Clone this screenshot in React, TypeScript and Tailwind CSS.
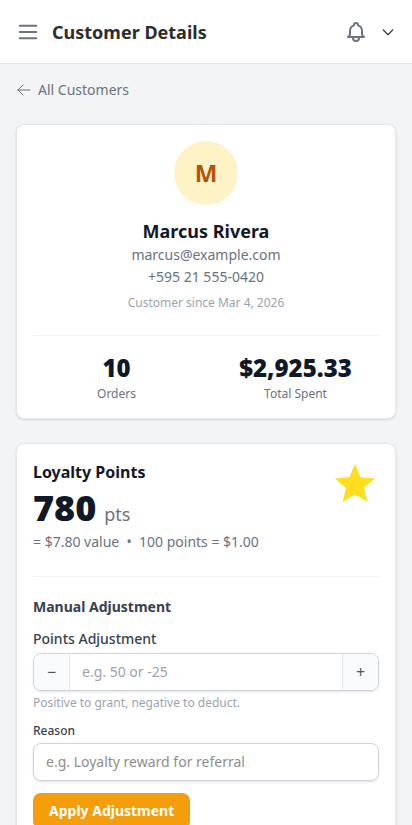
import React from "react";

interface StatProps {
  label: string;
  value: string;
}

function Stat({ label, value }: StatProps) {
  return (
    <div className="text-center">
      <p className="text-2xl font-black text-[#111827]">{value}</p>
      <p className="mt-0.5 text-xs text-[#6b7280]">{label}</p>
    </div>
  );
}

function Header() {
  return (
    <header className="flex h-16 items-center justify-between border-b border-[#e5e7eb] bg-white px-4">
      <div className="flex items-center gap-3">
        <svg className="h-6 w-6 text-[#6b7280]" fill="none" viewBox="0 0 24 24" stroke="currentColor" strokeWidth={2}>
          <path strokeLinecap="round" strokeLinejoin="round" d="M3.75 5.75h16.5M3.75 12h16.5M3.75 18.25h16.5" />
        </svg>
        <h1 className="text-lg font-bold text-[#2d2d2d]">Customer Details</h1>
      </div>
      <div className="flex items-center gap-3">
        <svg className="h-6 w-6 text-[#6b7280]" fill="none" viewBox="0 0 24 24" stroke="currentColor" strokeWidth={2}>
          <path
            strokeLinecap="round"
            strokeLinejoin="round"
            d="M15 17h5l-1.405-1.405A2.032 2.032 0 0118 14.158V11a6.002 6.002 0 00-4-5.659V5a2 2 0 10-4 0v.341C7.67 6.165 6 8.388 6 11v3.159c0 .538-.214 1.055-.595 1.436L4 17h5m6 0v1a3 3 0 11-6 0v-1m6 0H9"
          />
        </svg>
        <svg className="h-4 w-4 text-[#374151]" fill="none" viewBox="0 0 24 24" stroke="currentColor" strokeWidth={2}>
          <path strokeLinecap="round" strokeLinejoin="round" d="M19 9l-7 7-7-7" />
        </svg>
      </div>
    </header>
  );
}

function ProfileCard() {
  return (
    <section className="rounded-lg border border-[#e5e7eb] bg-white p-4 shadow-sm">
      <div className="flex flex-col items-center">
        <div className="flex h-16 w-16 items-center justify-center rounded-full bg-[#fef3c7] text-2xl font-bold text-[#b45309]">
          M
        </div>
        <h2 className="mt-3 text-lg font-bold text-[#111827]">Marcus Rivera</h2>
        <p className="text-sm text-[#6b7280]">marcus@example.com</p>
        <p className="mt-0.5 text-sm text-[#6b7280]">+595 21 555-0420</p>
        <p className="mt-2 text-xs text-[#9ca3af]">Customer since Mar 4, 2026</p>
      </div>
      <div className="mt-6 grid grid-cols-2 gap-3 border-t border-[#f3f4f6] pt-4">
        <Stat label="Orders" value="10" />
        <Stat label="Total Spent" value="$2,925.33" />
      </div>
    </section>
  );
}

function LoyaltyCard() {
  return (
    <section className="rounded-lg border border-[#e5e7eb] bg-white p-4 shadow-sm">
      <div className="flex items-start justify-between">
        <div>
          <h2 className="text-base font-bold text-[#111827]">Loyalty Points</h2>
          <p className="mt-1 text-4xl font-black text-[#111827]">
            780<span className="ml-2 text-lg font-normal text-[#6b7280]">pts</span>
          </p>
          <p className="mt-1 text-sm text-[#6b7280]">= $7.80 value &nbsp;•&nbsp; 100 points = $1.00</p>
        </div>
        <svg className="h-12 w-12 text-[#ffdd1f]" viewBox="0 0 24 24" fill="currentColor">
          <path d="M12 17.27L18.18 21l-1.64-7.03L22 9.24l-7.19-.61L12 2 9.19 8.63 2 9.24l5.46 4.73L5.82 21z" />
        </svg>
      </div>
      <div className="mt-6 border-t border-[#f3f4f6] pt-5">
        <h3 className="text-sm font-bold text-[#374151]">Manual Adjustment</h3>
        <label className="mt-3 block text-sm font-medium text-[#374151]">Points Adjustment</label>
        <div className="mt-1 flex h-[38px] overflow-hidden rounded-lg border border-[#d1d5db] shadow-sm">
          <button className="w-9 border-r border-[#e5e7eb] bg-[#f9fafb] text-base text-[#4b5563]">−</button>
          <input
            className="min-w-0 flex-1 px-3 text-sm placeholder:text-[#9ca3af]"
            placeholder="e.g. 50 or -25"
          />
          <button className="w-9 border-l border-[#e5e7eb] bg-[#f9fafb] text-base text-[#4b5563]">+</button>
        </div>
        <p className="mt-1 text-xs text-[#9ca3af]">Positive to grant, negative to deduct.</p>
        <label className="mt-3 block text-xs font-medium text-[#374151]">Reason</label>
        <input
          className="mt-1 block h-[38px] w-full rounded-lg border border-[#d1d5db] px-3 pb-0.5 text-sm shadow-sm placeholder:text-[#8e8e8e]"
          placeholder="e.g. Loyalty reward for referral"
        />
        <button className="mt-3 h-9 rounded-lg bg-[#f59e0b] px-4 text-sm font-bold text-white">
          Apply Adjustment
        </button>
      </div>
    </section>
  );
}

export default function App() {
  return (
    <div className="h-[825px] overflow-hidden bg-[#f3f4f6] font-['Noto_Sans',sans-serif]">
      <Header />
      <main className="px-4 pt-4">
        <a className="flex items-center gap-1.5 text-sm text-[#6b7280]">
          <svg className="h-4 w-4" fill="none" viewBox="0 0 24 24" stroke="currentColor" strokeWidth={1.5}>
            <path strokeLinecap="round" strokeLinejoin="round" d="M10.5 19.5L3 12m0 0l7.5-7.5M3 12h18" />
          </svg>
          All Customers
        </a>
        <div className="mt-6 space-y-6">
          <ProfileCard />
          <LoyaltyCard />
        </div>
      </main>
    </div>
  );
}
